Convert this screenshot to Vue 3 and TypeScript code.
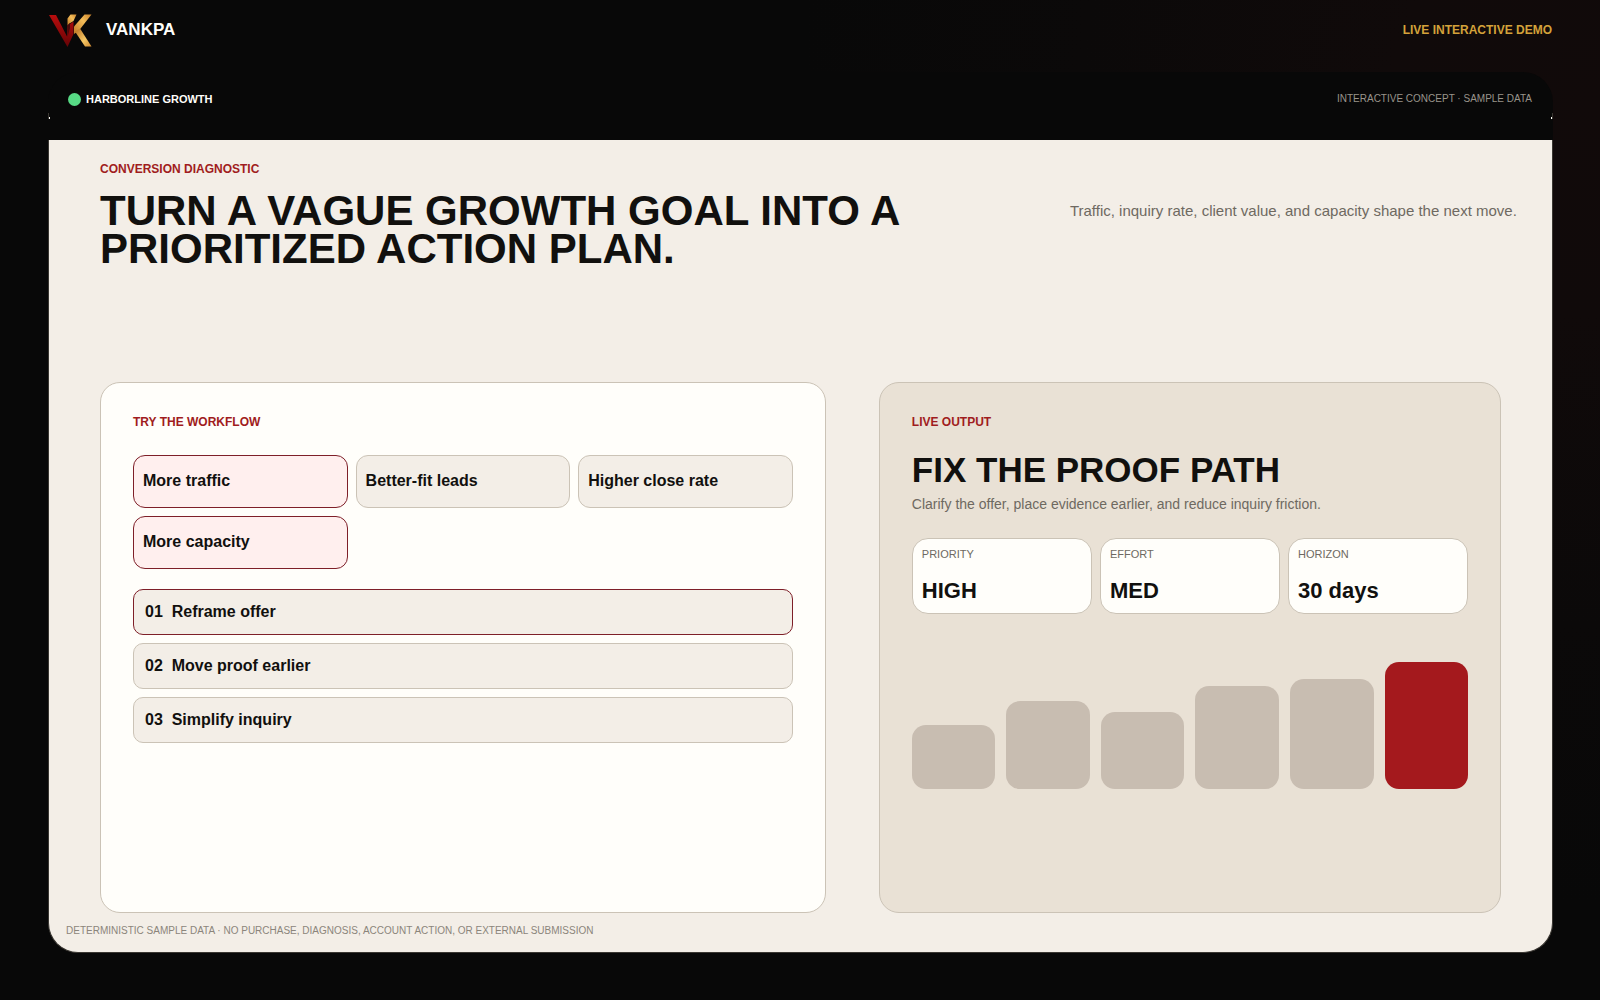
<script setup lang="ts">
import { ref } from 'vue'

interface Metric {
  label: string
  value: string
}

const goals = ['More traffic', 'Better-fit leads', 'Higher close rate', 'More capacity']
const selectedGoals = ref<string[]>(['More traffic', 'More capacity'])

const steps = ['Reframe offer', 'Move proof earlier', 'Simplify inquiry']
const activeStep = ref(0)

const metrics: Metric[] = [
  { label: 'PRIORITY', value: 'HIGH' },
  { label: 'EFFORT', value: 'MED' },
  { label: 'HORIZON', value: '30 days' },
]

const bars = [64, 88, 77, 103, 110, 127]

function toggleGoal(goal: string): void {
  selectedGoals.value = selectedGoals.value.includes(goal)
    ? selectedGoals.value.filter((g) => g !== goal)
    : [...selectedGoals.value, goal]
}

function stepLabel(index: number, step: string): string {
  return `${String(index + 1).padStart(2, '0')}  ${step}`
}
</script>

<template>
  <div class="page">
    <header class="site-header">
      <div class="brand">
        <svg class="logo" viewBox="0 0 43 33" aria-hidden="true">
          <defs>
            <linearGradient id="logo-red" x1="0" y1="0" x2="0" y2="1">
              <stop offset="0" stop-color="#b80d0d" />
              <stop offset="1" stop-color="#650306" />
            </linearGradient>
            <linearGradient id="logo-arm" x1="1" y1="0" x2="0" y2="1">
              <stop offset="0" stop-color="#c9822a" />
              <stop offset="0.4" stop-color="#f3bd5a" />
              <stop offset="1" stop-color="#c27a25" />
            </linearGradient>
            <linearGradient id="logo-leg" x1="0" y1="0" x2="1" y2="1">
              <stop offset="0" stop-color="#b8701f" />
              <stop offset="0.6" stop-color="#f6c765" />
              <stop offset="1" stop-color="#d08a30" />
            </linearGradient>
          </defs>
          <path d="M18.500 12V4.500L21.500 .500H27.500L24.500 7 20.500 9.500Z" fill="url(#logo-arm)" />
          <path d="M35.500 .500H42.500L30 16.500 25 20V12.500Z" fill="url(#logo-arm)" />
          <path d="M26 17.500L31 14.500 42.500 32.500H36Z" fill="url(#logo-leg)" />
          <path d="M0 1H7L18 22.500V12L24.500 7.500V20L18.500 33Z" fill="url(#logo-red)" />
          <path d="M18 11.500L21 9V14L18.500 23Z" fill="#4a0b0b" />
        </svg>
        <span class="brand-name">VANKPA</span>
      </div>
      <span class="demo-tag">LIVE INTERACTIVE DEMO</span>
    </header>

    <main class="shell">
      <div class="shell-bar">
        <span class="client"><i class="status-dot"></i>HARBORLINE GROWTH</span>
        <span class="bar-note">INTERACTIVE CONCEPT · SAMPLE DATA</span>
      </div>

      <div class="shell-body">
        <section class="intro">
          <div>
            <p class="eyebrow">CONVERSION DIAGNOSTIC</p>
            <h1>TURN A VAGUE GROWTH GOAL INTO A PRIORITIZED ACTION PLAN.</h1>
          </div>
          <p class="summary">Traffic, inquiry rate, client value, and capacity shape the next move.</p>
        </section>

        <div class="workspace">
          <section class="card">
            <p class="eyebrow">TRY THE WORKFLOW</p>
            <div class="goals">
              <button
                v-for="goal in goals"
                :key="goal"
                type="button"
                class="goal"
                :class="{ selected: selectedGoals.includes(goal) }"
                :aria-pressed="selectedGoals.includes(goal)"
                @click="toggleGoal(goal)"
              >{{ goal }}</button>
            </div>
            <div class="steps">
              <button
                v-for="(step, i) in steps"
                :key="step"
                type="button"
                class="step"
                :class="{ active: activeStep === i }"
                @click="activeStep = i"
              >{{ stepLabel(i, step) }}</button>
            </div>
          </section>

          <section class="card output">
            <p class="eyebrow">LIVE OUTPUT</p>
            <h2>FIX THE PROOF PATH</h2>
            <p class="advice">Clarify the offer, place evidence earlier, and reduce inquiry friction.</p>
            <dl class="metrics">
              <div v-for="m in metrics" :key="m.label" class="metric">
                <dt>{{ m.label }}</dt>
                <dd>{{ m.value }}</dd>
              </div>
            </dl>
            <div class="chart">
              <div
                v-for="(h, i) in bars"
                :key="i"
                class="bar"
                :class="{ peak: i === bars.length - 1 }"
                :style="{ height: h + 'px' }"
              ></div>
            </div>
          </section>
        </div>
      </div>

      <footer class="disclaimer">DETERMINISTIC SAMPLE DATA · NO PURCHASE, DIAGNOSIS, ACCOUNT ACTION, OR EXTERNAL SUBMISSION</footer>
    </main>
  </div>
</template>

<style>
body {
  margin: 0;
  background: #080808;
}
</style>

<style scoped>
* {
  box-sizing: border-box;
}

.page {
  display: flex;
  flex-direction: column;
  min-height: 100vh;
  padding: 0 47px 47px 48px;
  background: radial-gradient(circle at 100% 106px, #110a0a 0, #100a0a 210px, #0b0909 520px, #080808 800px);
  color: #11100e;
  font-family: "Liberation Sans", Arial, sans-serif;
}

p,
h1,
h2,
dl,
dd {
  margin: 0;
}

.site-header {
  display: flex;
  align-items: center;
  justify-content: space-between;
  height: 60px;
  margin-bottom: 12px;
  padding: 0 1px;
}

.brand {
  display: flex;
  align-items: center;
  gap: 14px;
}

.logo {
  width: 43px;
  height: 33px;
}

.brand-name {
  color: #fffefa;
  font-size: 17px;
  font-weight: 700;
}

.demo-tag {
  color: #d4a23a;
  font-size: 12px;
  font-weight: 700;
}

.shell {
  display: flex;
  flex: 1;
  flex-direction: column;
  border: 1px solid #3a3732;
  border-top: 0;
  border-radius: 40px 40px 30px 30px;
  background: #f3eee7;
}

.shell-bar {
  position: relative;
  display: flex;
  align-items: center;
  justify-content: space-between;
  height: 68px;
  margin: 0 -1px;
  padding: 0 21px 14px 20px;
  border-radius: 30px 30px 0 0;
  background: #080808;
}

/* Small light notches where the bar meets the shell frame */
.shell-bar::before,
.shell-bar::after {
  position: absolute;
  top: 41px;
  width: 2px;
  height: 6px;
  background:
    linear-gradient(#fffefa, #fffefa) right bottom / 1px 2px no-repeat,
    linear-gradient(#3a3732, #3a3732) left / 1px 100% no-repeat;
  content: "";
}

.shell-bar::before {
  left: 0;
}

.shell-bar::after {
  right: 0;
  transform: scaleX(-1);
}

.client {
  display: flex;
  align-items: center;
  gap: 5px;
  color: #fffefa;
  font-size: 11px;
  font-weight: 700;
  line-height: 13px;
}

.status-dot {
  width: 13px;
  height: 13px;
  border-radius: 50%;
  background: #57da85;
}

.bar-note {
  color: #99948b;
  font-size: 10px;
  line-height: 12px;
}

.shell-body {
  display: flex;
  flex: 1;
  flex-direction: column;
  padding: 22px 51px 0;
}

.intro {
  display: grid;
  grid-template-columns: minmax(0, 9fr) minmax(0, 4fr);
  padding-bottom: 114px;
}

.eyebrow {
  color: #a01c20;
  font-size: 12px;
  font-weight: 700;
  line-height: 14px;
}

h1 {
  margin-top: 16px;
  font-size: 42px;
  line-height: 38px;
}

.summary {
  padding-top: 38px;
  color: #6e6961;
  font-size: 15px;
  line-height: 22px;
  white-space: nowrap;
}

.workspace {
  display: grid;
  flex: 1;
  grid-template-columns: minmax(0, 7fr) minmax(0, 6fr);
  gap: 53px;
}

.card {
  padding: 32px;
  border: 1px solid #cbc3b6;
  border-radius: 20px;
  background: #fffefa;
}

.output {
  background: #e9e1d5;
}

.goals {
  display: grid;
  grid-template-columns: repeat(3, minmax(0, 1fr));
  gap: 8px;
  margin-top: 26px;
}

.goal,
.step {
  border: 1px solid #cbc3b6;
  background: #f3eee7;
  color: #11100e;
  font: 700 16px/18px "Liberation Sans", Arial, sans-serif;
  text-align: left;
  white-space: pre;
  cursor: pointer;
}

.goal {
  height: 53px;
  padding: 0 9px 2px;
  border-radius: 12px;
}

.goal.selected {
  border-color: #7e1f28;
  background: #ffefee;
}

.steps {
  display: grid;
  gap: 8px;
  margin-top: 20px;
}

.step {
  height: 46px;
  padding: 0 11px;
  border-radius: 10px;
}

.step.active {
  border-color: #7e1f28;
}

h2 {
  margin-top: 23px;
  font-size: 35px;
  line-height: 36px;
}

.advice {
  margin-top: 6px;
  color: #6e6961;
  font-size: 14px;
  line-height: 20px;
}

.metrics {
  display: grid;
  grid-template-columns: repeat(3, minmax(0, 1fr));
  gap: 8px;
  margin-top: 24px;
}

.metric {
  padding: 9px;
  border: 1px solid #cbc3b6;
  border-radius: 16px;
  background: #fffefa;
}

dt {
  color: #6e6961;
  font-size: 11px;
  line-height: 13px;
}

dd {
  margin-top: 16px;
  font-size: 22px;
  font-weight: 700;
  line-height: 27px;
}

.chart {
  display: flex;
  align-items: flex-end;
  gap: 11px;
  margin-top: 48px;
}

.bar {
  flex: 1;
  border-radius: 14px;
  background: #c8bdb1;
}

.bar.peak {
  background: #a4191d;
}

.disclaimer {
  padding: 12px 17px 15px;
  color: #8b857b;
  font-size: 10px;
  line-height: 12px;
}
</style>
